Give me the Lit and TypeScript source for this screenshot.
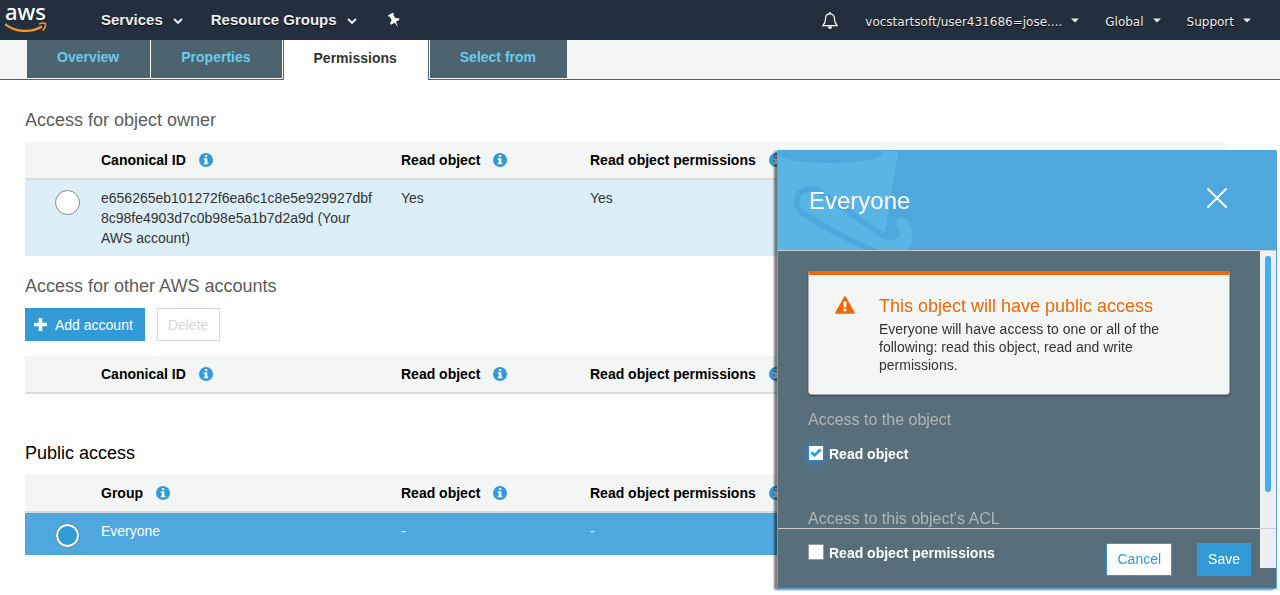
import { LitElement, html, css, nothing } from "lit";
import { customElement, property, state } from "lit/decorators.js";
import { classMap } from "lit/directives/class-map.js";

const infoIcon = html`<svg class="info" viewBox="0 0 14 14" aria-hidden="true">
  <circle cx="7" cy="7" r="7" fill="#329ad6" />
  <path d="M5.9 2.2h2.4v1.9H5.9zM4.8 5.2h3.5v4.6h1v1.5H4.8V9.8h1V6.7h-1z" fill="#fff" />
</svg>`;

const chevron = html`<svg class="chevron" viewBox="0 0 10 6" aria-hidden="true">
  <path d="M1 1l4 3.8L9 1" fill="none" stroke="#eee" stroke-width="2" />
</svg>`;

const caret = html`<svg class="caret" viewBox="0 0 8 5" aria-hidden="true">
  <path d="M0 0.5h8L4 4.5z" fill="#eee" />
</svg>`;

@customElement("console-nav")
class ConsoleNav extends LitElement {
  static styles = css`
    :host {
      display: flex;
      align-items: center;
      height: 40px;
      background: #232f3e;
      color: #eee;
    }
    .logo {
      display: block;
      width: 42px;
      height: 36px;
      margin: 0 54px 0 5px;
    }
    .menu {
      display: flex;
      align-items: center;
      padding: 0;
      border: 0;
      background: none;
      color: #eee;
      font: bold 15px/20px "Liberation Sans", Arial, sans-serif;
      text-shadow: 0 1px 0 #000;
      white-space: nowrap;
      cursor: pointer;
    }
    .main {
      gap: 10px;
      margin-right: 28px;
    }
    .small {
      gap: 9px;
      font: 12px/20px "DejaVu Sans", sans-serif;
      margin-right: 26px;
      padding-top: 3px;
    }
    .small:last-child {
      margin-right: 29px;
    }
    .chevron {
      width: 10px;
      height: 6px;
      margin-top: 2px;
    }
    .caret {
      width: 8px;
      height: 5px;
      margin-bottom: 2px;
    }
    .pin {
      width: 14px;
      height: 14px;
      margin-left: 2px;
    }
    .bell {
      width: 16px;
      height: 18px;
      margin: 2px 27px 0 0;
    }
    .icon {
      display: block;
    }
    .space {
      flex: 1;
    }
  `;
  render() {
    return html`
      <svg class="logo" viewBox="0 0 42 36" role="img" aria-label="aws">
        <text x="0" y="18" font-family="Noto Sans, sans-serif" font-weight="500" font-size="22" fill="#fff">aws</text>
        <path d="M0 22C11 30.500 26 31 37 24.500" fill="none" stroke="#f7981d" stroke-width="2.200" />
        <path d="M34 22c2.500-1 5-1.200 6.500-.500.3 2.500-.8 5-3 7" fill="none" stroke="#f7981d" stroke-width="1.500" />
      </svg>
      <button class="menu main">Services ${chevron}</button>
      <button class="menu main">Resource Groups ${chevron}</button>
      <button class="menu" aria-label="Pin shortcuts">
        <svg class="icon pin" viewBox="0 0 14 14">
          <path transform="rotate(-30 7 7)" d="M4 0h6v1.600l-1 .6v3.600l3 2v1.800H7.800L7 15 6.200 9.600H2V7.800l3-2V2.200l-1-.6z" fill="#fff" />
        </svg>
      </button>
      <span class="space"></span>
      <button class="menu" aria-label="Notifications">
        <svg class="icon bell" viewBox="0 0 16 18">
          <path d="M8 1.800C5 1.800 3.600 4 3.600 6.500c0 4-1 5.300-2.800 7.200h14.400c-1.800-1.900-2.800-3.200-2.800-7.200C12.400 4 11 1.800 8 1.800z" fill="none" stroke="#fff" stroke-width="1.200" />
          <path d="M7 .2h2v1.600H7zM5.800 14.500h4.400a2.200 2.400 0 0 1-4.400 0z" fill="#fff" />
        </svg>
      </button>
      <button class="menu small">vocstartsoft/user431686=jose.... ${caret}</button>
      <button class="menu small">Global ${caret}</button>
      <button class="menu small">Support ${caret}</button>
    `;
  }
}

@customElement("object-tabs")
class ObjectTabs extends LitElement {
  @property() active = "Permissions";
  static styles = css`
    :host {
      display: block;
      height: 39px;
      padding-left: 27px;
      background: #f4f6f6;
      border-bottom: 1px solid #4d6470;
      font: bold 14px/34px "Liberation Sans", Arial, sans-serif;
    }
    .tabs {
      display: inline-flex;
      gap: 1px;
      height: 39px;
      background: #fff;
    }
    .tab {
      box-sizing: border-box;
      height: 38px;
      padding: 0 31px 0 30px;
      background: #4d6470;
      color: #68cbee;
      text-decoration: none;
      white-space: nowrap;
    }
    .active {
      height: 40px;
      padding-top: 1px;
      background: #fff;
      color: #333;
      border: solid #4d6470;
      border-width: 0 1px;
    }
  `;
  render() {
    return html`<nav class="tabs">
      ${["Overview", "Properties", "Permissions", "Select from"].map(
        (t) => html`<a href="#" class=${classMap({ tab: true, active: t === this.active })}>${t}</a>`
      )}
    </nav>`;
  }
}

interface Grant {
  who: string;
  read: string;
  acl: string;
}

@customElement("grant-table")
class GrantTable extends LitElement {
  @property() label = "Canonical ID";
  @property() name = "owner";
  @property({ type: Boolean }) selected = false;
  @property({ attribute: false }) rows: Grant[] = [];
  static styles = css`
    :host {
      display: block;
      font: 14px/20px "Liberation Sans", Arial, sans-serif;
    }
    .table {
      width: 100%;
      table-layout: fixed;
      border-collapse: separate;
      border-spacing: 0;
    }
    .pick {
      width: 76px;
    }
    .who {
      width: 300px;
    }
    .read {
      width: 189px;
    }
    .head {
      padding: 8px 0;
      background: #f4f6f6;
      border-bottom: 2px solid #dadcdc;
      color: #000;
      text-align: left;
      white-space: nowrap;
    }
    .info {
      width: 14px;
      height: 14px;
      margin-left: 9px;
      vertical-align: -2px;
    }
    .cell {
      padding: 8px 26px 8px 0;
      background: #dceef8;
      color: #333;
      vertical-align: top;
      overflow-wrap: anywhere;
    }
    .selected .cell {
      background: #4ea8de;
      color: #fff;
    }
    .choice {
      padding: 10px 0 7px 30px;
    }
    .radio {
      display: block;
      appearance: none;
      box-sizing: border-box;
      width: 25px;
      height: 25px;
      margin: 0;
      border: 1px solid #888;
      border-radius: 50%;
      background: #fff;
    }
    .radio:checked {
      background: #329ad6;
      box-shadow: inset 0 0 0 2px #fff;
    }
  `;
  render() {
    return html`<table class="table">
      <thead>
        <tr>
          <th class="head pick"></th>
          <th class="head who">${this.label} ${infoIcon}</th>
          <th class="head read">Read object ${infoIcon}</th>
          <th class="head">Read object permissions ${infoIcon}</th>
        </tr>
      </thead>
      <tbody>
        ${this.rows.map(
          (r) => html`<tr class=${classMap({ selected: this.selected })}>
            <td class="cell choice">
              <input class="radio" type="radio" name=${this.name} aria-label=${r.who} .checked=${this.selected} />
            </td>
            <td class="cell">${r.who}</td>
            <td class="cell">${r.read}</td>
            <td class="cell">${r.acl}</td>
          </tr>`
        )}
      </tbody>
    </table>`;
  }
}

@customElement("access-panel")
class AccessPanel extends LitElement {
  @state() private readObject = true;
  @state() private readAcl = false;
  static styles = css`
    :host {
      position: fixed;
      top: 150px;
      right: 3px;
      bottom: 6px;
      display: flex;
      flex-direction: column;
      box-sizing: border-box;
      width: 500px;
      max-width: 100%;
      border: solid #4ea8de;
      border-width: 0 1px 1px;
      border-radius: 2px;
      background: #586f7b;
      box-shadow: -3px 1px 2px rgba(0, 0, 0, 0.5);
      font: 14px/18px "Liberation Sans", Arial, sans-serif;
    }
    .header {
      position: relative;
      flex: none;
      display: flex;
      align-items: center;
      justify-content: space-between;
      height: 100px;
      padding: 0 48px 0 31px;
      background: #4ea8de;
      border-bottom: 1px solid #ccc;
      color: #fff;
    }
    .bucket {
      position: absolute;
      left: 0;
      top: 0;
      width: 140px;
      height: 100px;
    }
    .title {
      position: relative;
      margin: 2px 0 0;
      font-size: 24px;
      font-weight: normal;
      line-height: 28px;
    }
    .close {
      padding: 0;
      border: 0;
      background: none;
      cursor: pointer;
    }
    .cross {
      display: block;
      width: 22px;
      height: 22px;
      margin-bottom: 4px;
    }
    .main {
      flex: 1;
      display: flex;
      min-height: 0;
      margin-bottom: 20px;
    }
    .body {
      flex: 1;
      overflow: hidden;
      padding: 20px 30px 0;
    }
    .track {
      width: 6px;
      padding: 5px;
      background: #eeeff2;
    }
    .thumb {
      height: 77%;
      border-radius: 3px;
      background: #3eaeec;
    }
    .alert {
      display: flex;
      gap: 24px;
      padding: 20px 50px 20px 26px;
      border: 1px solid #aab;
      border-top: 4px solid #eb6a07;
      border-radius: 0 0 4px 4px;
      background: #f4f6f6;
      box-shadow: 0 1px 2px rgba(0, 0, 0, 0.4);
      color: #333;
    }
    .warn {
      flex: none;
      width: 20px;
      height: 18px;
      margin-top: 1px;
    }
    .alert-title {
      margin: 0 0 3px;
      color: #eb6a07;
      font-size: 18px;
      font-weight: normal;
      line-height: 22px;
    }
    .text {
      margin: 0;
    }
    .legend {
      margin: 15px 0 24px;
      color: #b0b4b6;
      font-size: 16px;
      font-weight: normal;
      line-height: 20px;
    }
    .field {
      position: relative;
      display: flex;
      align-items: center;
      gap: 5px;
      margin: -10px 0 45px;
      color: #fff;
      font-weight: bold;
      line-height: 20px;
    }
    .box {
      appearance: none;
      box-sizing: border-box;
      width: 16px;
      height: 16px;
      margin: 0 0 2px;
      border: 1px solid #999;
      background: #fff;
    }
    .box:checked {
      border-color: #3080d0;
      box-shadow: 0 0 14px #3f86c8;
    }
    .check {
      position: absolute;
      left: 2px;
      top: 4px;
      width: 12px;
      height: 9px;
      pointer-events: none;
    }
    .footer {
      position: absolute;
      left: 0;
      right: 0;
      bottom: 0;
      display: flex;
      justify-content: flex-end;
      gap: 25px;
      padding: 14px 25px 12px;
      border-top: 1px solid #ccc;
    }
    .button {
      height: 33px;
      padding: 0 10px 1px;
      border: 1px solid #329ad6;
      background: #329ad6;
      color: #fff;
      font: inherit;
      cursor: pointer;
    }
    .plain {
      background: #fff;
      color: #329ad6;
    }
  `;
  private box(label: string, on: boolean, set: (v: boolean) => void) {
    return html`<label class="field">
      <input class="box" type="checkbox" .checked=${on}
        @change=${(e: Event) => set((e.target as HTMLInputElement).checked)} />
      ${on
        ? html`<svg class="check" viewBox="0 0 12 9" aria-hidden="true">
            <path d="M1.300 4.300l3.200 2.900 6.200-5.700" fill="none" stroke="#329ad6" stroke-width="2.800" />
          </svg>`
        : nothing}
      <span>${label}</span>
    </label>`;
  }
  render() {
    return html`
      <header class="header">
        <svg class="bucket" viewBox="0 0 140 100" aria-hidden="true">
          <path d="M0 1H120.500L107 82 L90 100H0z" fill="#58b5e5" />
          <path d="M60 72L108 90Q124 91 121.500 81L117.500 74Q118 67 124 67C131 69 134.500 77 134.500 86Q134.500 95 129 100H70z" fill="#58b5e5" />
          <path d="M0 0H104C107 9 82 13 52 13 22 13 4 9 0 5z" fill="#4ea8de" />
          <path d="M100 102.500C72 91 48 78 26 64C14 56 17 39 33 39C38 39 42 42 46 45L94 78C103 84 109 88 114 86.500Q119 85 119 79" fill="none" stroke="#4ea8de" stroke-width="6" />
        </svg>
        <h2 class="title">Everyone</h2>
        <button class="close" aria-label="Close">
          <svg class="cross" viewBox="0 0 22 22">
            <path d="M1.500 1.500l19 19M20.500 1.500l-19 19" stroke="#fff" stroke-width="1.800" />
          </svg>
        </button>
      </header>
      <div class="main">
        <div class="body">
          <section class="alert">
            <svg class="warn" viewBox="0 0 20 18" aria-hidden="true">
              <path d="M10 0.800L19 17H1z" fill="#eb6a07" stroke="#eb6a07" stroke-width="1.600" stroke-linejoin="round" />
              <path d="M8.400 5.500h3.200l-.5 6H8.900zM8.600 12.800h2.800v2.400H8.600z" fill="#fff" />
            </svg>
            <div>
              <h3 class="alert-title">This object will have public access</h3>
              <p class="text">
                Everyone will have access to one or all of the following: read this object, read and write
                permissions.
              </p>
            </div>
          </section>
          <h3 class="legend">Access to the object</h3>
          ${this.box("Read object", this.readObject, (v) => (this.readObject = v))}
          <h3 class="legend">Access to this object's ACL</h3>
          ${this.box("Read object permissions", this.readAcl, (v) => (this.readAcl = v))}
        </div>
        <div class="track"><div class="thumb"></div></div>
      </div>
      <footer class="footer">
        <button class="button plain">Cancel</button>
        <button class="button">Save</button>
      </footer>
    `;
  }
}

@customElement("app-root")
class AppRoot extends LitElement {
  static styles = css`
    :host {
      display: block;
      min-height: 100vh;
      background: #fff;
      font: 14px/20px "Liberation Sans", Arial, sans-serif;
    }
    .content {
      padding: 30px 55px 20px 25px;
    }
    .heading {
      margin: 0 0 12px;
      color: #5c5c5c;
      font-size: 18px;
      font-weight: normal;
      line-height: 20px;
    }
    .others {
      margin-top: 20px;
    }
    .public {
      margin-top: 49px;
      color: #000;
    }
    .actions {
      display: flex;
      gap: 12px;
      margin-bottom: 15px;
    }
    .button {
      display: flex;
      align-items: center;
      gap: 8px;
      height: 33px;
      padding: 0 11px 0 10px;
      border: 1px solid #329ad6;
      background: #329ad6;
      color: #fff;
      font: inherit;
      cursor: pointer;
    }
    .add {
      padding-left: 8px;
    }
    .plus {
      width: 13px;
      height: 13px;
    }
    .button:disabled {
      border-color: #d8d8d8;
      background: #fff;
      color: #d8d8d8;
    }
  `;
  render() {
    const owner = [
      {
        who: "e656265eb101272f6ea6c1c8e5e929927dbf8c98fe4903d7c0b98e5a1b7d2a9d (Your AWS account)",
        read: "Yes",
        acl: "Yes",
      },
    ];
    const everyone = [{ who: "Everyone", read: "-", acl: "-" }];
    return html`
      <console-nav></console-nav>
      <object-tabs></object-tabs>
      <main class="content">
        <h2 class="heading">Access for object owner</h2>
        <grant-table .rows=${owner}></grant-table>
        <h2 class="heading others">Access for other AWS accounts</h2>
        <div class="actions">
          <button class="button add">
            <svg class="plus" viewBox="0 0 13 13" aria-hidden="true">
              <path d="M6.500 0.800v11.400M0.800 6.500h11.400" stroke="#fff" stroke-width="3.600" stroke-linecap="round" />
            </svg>
            Add account
          </button>
          <button class="button" disabled>Delete</button>
        </div>
        <grant-table></grant-table>
        <h2 class="heading public">Public access</h2>
        <grant-table label="Group" name="group" selected .rows=${everyone}></grant-table>
      </main>
      <access-panel></access-panel>
    `;
  }
}
